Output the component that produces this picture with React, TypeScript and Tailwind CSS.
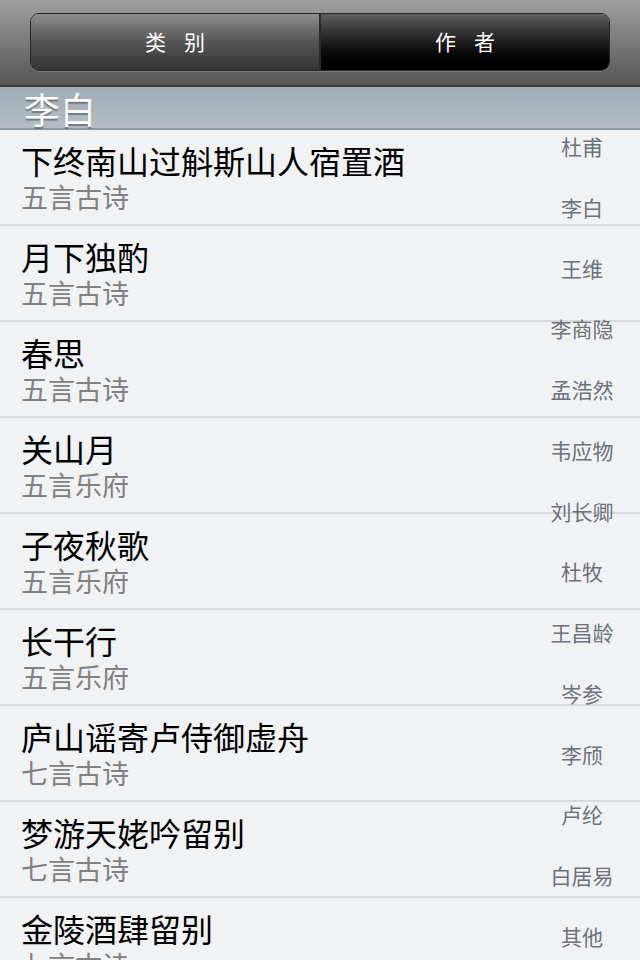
import React from "react";

const poems = [
  { title: "下终南山过斛斯山人宿置酒", kind: "五言古诗" },
  { title: "月下独酌", kind: "五言古诗" },
  { title: "春思", kind: "五言古诗" },
  { title: "关山月", kind: "五言乐府" },
  { title: "子夜秋歌", kind: "五言乐府" },
  { title: "长干行", kind: "五言乐府" },
  { title: "庐山谣寄卢侍御虚舟", kind: "七言古诗" },
  { title: "梦游天姥吟留别", kind: "七言古诗" },
  { title: "金陵酒肆留别", kind: "七言古诗" },
];

const authors = [
  "杜甫", "李白", "王维", "李商隐", "孟浩然", "韦应物", "刘长卿",
  "杜牧", "王昌龄", "岑参", "李颀", "卢纶", "白居易", "其他",
];

const font = "font-['Noto_Sans_CJK_SC','Noto_Sans',sans-serif]";

export default function App() {
  return (
    <div className={`relative h-[960px] w-[640px] overflow-hidden bg-[#f1f2f4] ${font}`}>
      {/* top bar */}
      <header className="h-[87px] border-b-2 border-[#3c3c3c] bg-gradient-to-b from-[#a0a0a0] to-[#555] px-[30px] pt-[13px]">
        <div className="flex h-[58px] overflow-hidden rounded-[9px] border border-[#262626] shadow-[0_1px_0_rgba(255,255,255,0.18)]">
          <div className="flex flex-1 items-center justify-center gap-[18px] bg-gradient-to-b from-[#8e8e8e] via-[#555] to-[#353535] text-[21px] text-white">
            <span>类</span>
            <span>别</span>
          </div>
          <div className="w-[2px] bg-[#2a2a2a]" />
          <div className="flex flex-1 items-center justify-center gap-[18px] bg-gradient-to-b from-[#5e5e5e] via-[#1e1e1e] to-black text-[21px] text-white">
            <span>作</span>
            <span>者</span>
          </div>
        </div>
      </header>

      {/* section header */}
      <div className="flex h-[43px] items-center border-b-2 border-[#8e979f] bg-gradient-to-b from-[#a0acb6] to-[#b6bdc5] pl-[24px]">
        <span className="text-[36px] leading-none text-white [text-shadow:0_2px_1px_rgba(70,80,90,0.6)]">
          李白
        </span>
      </div>

      {/* rows */}
      <div>
        {poems.map((p) => (
          <div
            key={p.title}
            className="h-[96px] border-b-2 border-[#d9dadc] pl-[21px] pt-[10px]"
          >
            <div className="text-[32px] leading-[40px] text-black">{p.title}</div>
            <div className="text-[27px] leading-[34px] text-[#808080]">{p.kind}</div>
          </div>
        ))}
      </div>

      {/* index overlay */}
      <div className="absolute right-[13px] top-[132px] flex h-[818px] w-[90px] flex-col items-center justify-between text-[21px] leading-[28px] text-[#6c717a]">
        {authors.map((a) => (
          <span key={a}>{a}</span>
        ))}
      </div>
    </div>
  );
}
